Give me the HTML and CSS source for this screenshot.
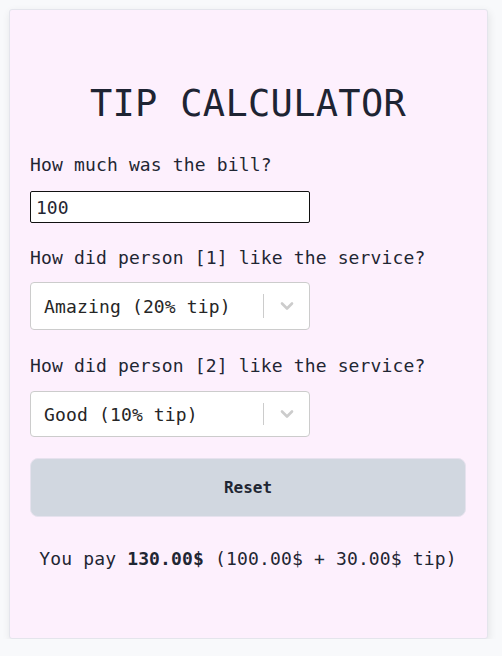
FILE: index.html
```html
<!DOCTYPE html>
<html lang="en">
<head>
<meta charset="utf-8">
<title>Tip Calculator</title>
<link rel="stylesheet" href="styles.css">
</head>
<body>
<main class="card">
  <h1 class="title">TIP CALCULATOR</h1>
  <label class="label label-bill" for="bill">How much was the bill?</label>
  <input class="bill-input" id="bill" type="text" value="100">
  <div class="label label-person label-first">How did person [1] like the service?</div>
  <div class="select select-first">
    <span class="select-value">Amazing (20% tip)</span>
    <span class="select-sep"></span>
    <span class="select-indicator">
      <svg width="14" height="10" viewBox="0 0 14 10" aria-hidden="true"><path d="M2 2.5 L7 7.5 L12 2.5" fill="none" stroke="#cccccc" stroke-width="2.6" stroke-linecap="round" stroke-linejoin="round"/></svg>
    </span>
  </div>
  <div class="label label-person">How did person [2] like the service?</div>
  <div class="select select-second">
    <span class="select-value">Good (10% tip)</span>
    <span class="select-sep"></span>
    <span class="select-indicator">
      <svg width="14" height="10" viewBox="0 0 14 10" aria-hidden="true"><path d="M2 2.5 L7 7.5 L12 2.5" fill="none" stroke="#cccccc" stroke-width="2.6" stroke-linecap="round" stroke-linejoin="round"/></svg>
    </span>
  </div>
  <button class="reset" type="button">Reset</button>
  <p class="result">You pay <strong>130.00$</strong> (100.00$ + 30.00$ tip)</p>
</main>
</body>
</html>
```
FILE: styles.css
```css
html, body {
  margin: 0;
  padding: 0;
}
body {
  background: #f8f9fb;
  font-family: "DejaVu Sans Mono", "Liberation Mono", monospace;
  color: #1f2633;
  padding: 9px 0 0 9px;
}
.card {
  box-sizing: border-box;
  width: 479px;
  height: 630px;
  background: #fdf0fd;
  border: 1px solid #e4e5ec;
  border-radius: 3px;
  box-shadow: 1px 3px 8px rgba(0, 0, 0, 0.09);
  padding: 72px 21px 0 20px;
  display: flex;
  flex-direction: column;
}
.title {
  margin: 0;
  font-size: 37px;
  font-weight: 400;
  line-height: 43px;
  text-align: center;
  color: #1e2433;
  letter-spacing: 0.3px;
}
.label {
  display: block;
  font-size: 18px;
  line-height: 21px;
  letter-spacing: 0.15px;
}
.label-bill {
  margin-top: 29px;
}
.label-person {
  margin-top: 25px;
}
.label-first {
  margin-top: 24px;
}
.bill-input {
  box-sizing: border-box;
  margin-top: 16px;
  width: 280px;
  height: 32px;
  border: 1px solid #111;
  border-radius: 2px;
  background: #fff;
  font-family: inherit;
  font-size: 18px;
  color: #1f2633;
  padding: 0 5px;
  outline: none;
}
.select {
  box-sizing: border-box;
  margin-top: 14px;
  width: 280px;
  height: 48px;
  background: #fff;
  border: 1px solid #cccccc;
  border-radius: 4px;
  display: flex;
  align-items: center;
}
.select-second {
  height: 46px;
  margin-top: 15px;
}
.select-value {
  flex: 1;
  padding-left: 13px;
  font-size: 18px;
  letter-spacing: 0.15px;
  color: #262626;
}
.select-sep {
  width: 1px;
  align-self: stretch;
  margin: 11px 0;
  background: #cccccc;
}
.select-indicator {
  width: 45px;
  display: flex;
  justify-content: center;
  align-items: center;
}
.reset {
  box-sizing: border-box;
  margin-top: 21px;
  width: 436px;
  height: 59px;
  background: #d1d7e0;
  border: 1px solid #e6e2ee;
  border-radius: 8px;
  font-family: inherit;
  font-size: 16px;
  font-weight: 700;
  color: #1f2633;
  cursor: pointer;
}
.result {
  margin: 31px 0 0;
  font-size: 18px;
  line-height: 21px;
  text-align: center;
  letter-spacing: 0.15px;
}
.result strong {
  font-weight: 700;
}
```
